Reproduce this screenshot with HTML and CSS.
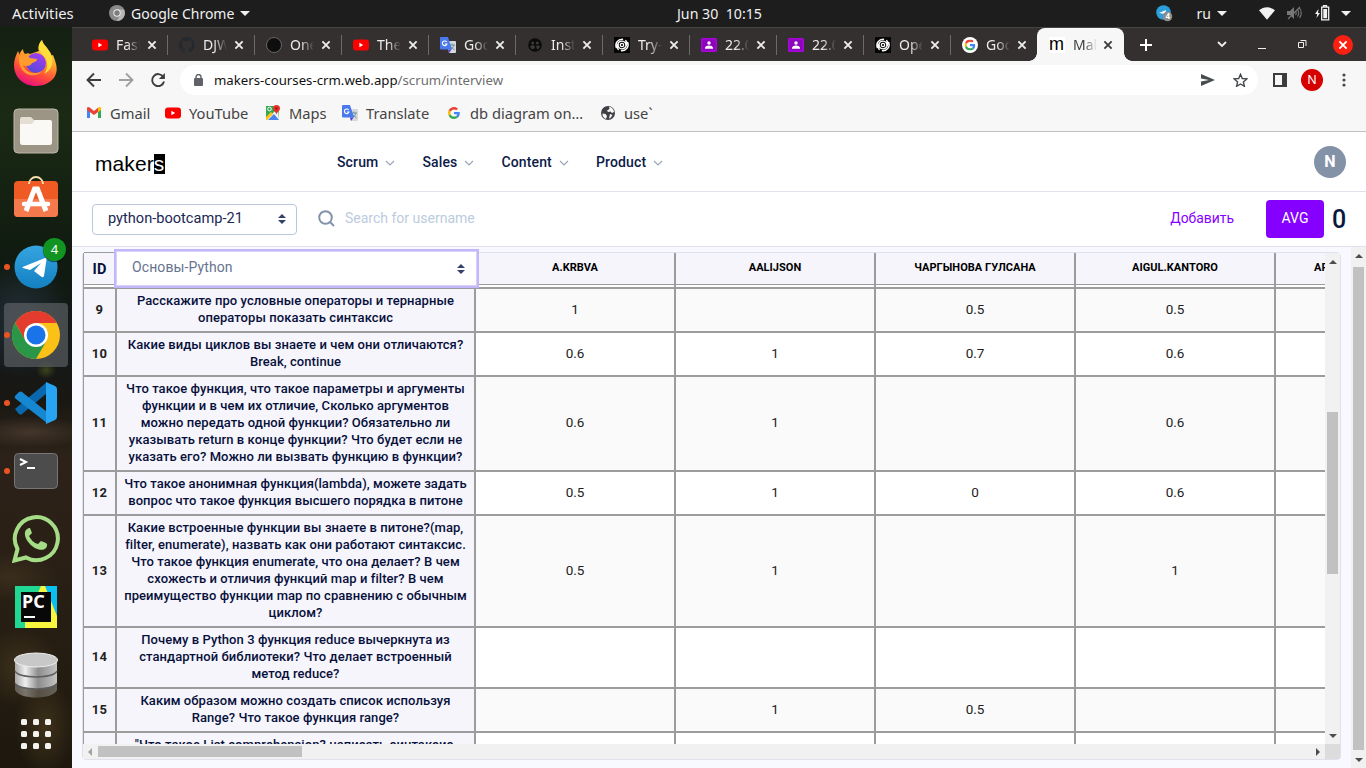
FILE: index.html
```html
<!DOCTYPE html>
<html lang="ru">
<head>
<meta charset="utf-8">
<title>Makers</title>
<link rel="stylesheet" href="styles.css">
</head>
<body>
<svg width="0" height="0" class="defs" aria-hidden="true">
  <defs>
    <linearGradient id="ff" x1=".7" y1="0" x2=".3" y2="1"><stop offset="0" stop-color="#fff44f"/><stop offset=".4" stop-color="#ffa02e"/><stop offset=".7" stop-color="#ff4b3a"/><stop offset="1" stop-color="#e80a83"/></linearGradient>
    <linearGradient id="fp" x1=".8" y1="0" x2=".2" y2="1"><stop offset="0" stop-color="#a63df0"/><stop offset="1" stop-color="#4f4bd8"/></linearGradient>
    <linearGradient id="tg" x1="0" y1="0" x2="0" y2="1"><stop offset="0" stop-color="#35a5e0"/><stop offset="1" stop-color="#1380c2"/></linearGradient>
    <linearGradient id="db" x1="0" y1="0" x2="1" y2="0"><stop offset="0" stop-color="#aaa"/><stop offset=".25" stop-color="#eee"/><stop offset=".55" stop-color="#8d8d8d"/><stop offset="1" stop-color="#c4c4c4"/></linearGradient>
    <symbol id="yt" viewBox="0 0 16 16"><rect y="2.5" width="16" height="11" rx="3" fill="red"/><path d="M6.400 5.800v4.400L10.200 8z" fill="#fff"/></symbol>
    <symbol id="x" viewBox="0 0 10 10"><path d="M1.400 1.400l7.200 7.200M8.600 1.400L1.400 8.600" stroke="currentColor" stroke-width="1.9"/></symbol>
    <symbol id="gt" viewBox="0 0 16 16"><path d="M6 4h9a1 1 0 011 1v10a1 1 0 01-1 1H9z" fill="#d5d9dc"/><path d="M9 8h6M12 6.500v1.500M14 8c-.5 2-2 3.500-3.500 4.500M11 9.500c1 1.500 2 2.500 3.500 3.300" stroke="#66919c" fill="none"/><path d="M8 12.500h3.500L9 16z" fill="#5a35c9"/><path d="M1 0h7l4 12.500H1a1 1 0 01-1-1V1a1 1 0 011-1z" fill="#4a79ee"/><path d="M6.600 5A2.300 2.300 0 106.900 7H4.800" stroke="#fff" stroke-width="1.100" fill="none"/></symbol>
    <symbol id="goo" viewBox="0 0 48 48"><path fill="#EA4335" d="M24 9.500c3.540 0 6.710 1.220 9.210 3.600l6.850-6.850C35.900 2.380 30.470 0 24 0 14.620 0 6.510 5.380 2.560 13.220l7.980 6.190C12.430 13.720 17.740 9.500 24 9.500z"/><path fill="#4285F4" d="M46.980 24.550c0-1.570-.15-3.090-.38-4.550H24v9.020h12.940c-.58 2.960-2.260 5.480-4.780 7.180l7.730 6c4.510-4.180 7.090-10.360 7.090-17.650z"/><path fill="#FBBC05" d="M10.530 28.590c-.48-1.450-.76-2.990-.76-4.590s.27-3.140.76-4.590l-7.980-6.190C.92 16.460 0 20.120 0 24c0 3.880.92 7.540 2.560 10.780l7.970-6.190z"/><path fill="#34A853" d="M24 48c6.480 0 11.930-2.130 15.890-5.810l-7.730-6c-2.150 1.450-4.920 2.300-8.160 2.300-6.260 0-11.570-4.220-13.470-9.910l-7.980 6.190C6.510 42.620 14.620 48 24 48z"/></symbol>
    <symbol id="spiral" viewBox="0 0 16 16"><rect width="16" height="16" fill="#050505"/><g fill="none" stroke="#fff" stroke-linecap="round"><path d="M2.300 10.500C.8 6 4 2 8.500 2.200M13.700 5.500C15.200 10 12 14 7.500 13.800" stroke-width="1.500"/><path d="M4.300 12.500C1.800 9 4.300 4.200 8 4.200c3 0 4.200 2.500 3.800 4.600M11.700 3.500C14.200 7 11.700 11.800 8 11.800c-3 0-4.200-2.500-3.800-4.600" stroke-width="1.300"/><circle cx="8" cy="8" r="1.700" stroke-width="1.200"/></g></symbol>
    <symbol id="class" viewBox="0 0 16 16"><rect y="1" width="16" height="14" rx="1.500" fill="#a906dc"/><rect x="1.500" y="2.500" width="13" height="11" fill="#8c05bb"/><circle cx="8" cy="6" r="1.700" fill="#fff"/><path d="M4 11.800V11c0-1.700 2.400-2.500 4-2.500s4 .8 4 2.500v.8z" fill="#fff"/></symbol>
    <symbol id="chev" viewBox="0 0 10 6"><path d="M1 1l4 4 4-4" fill="none" stroke="#9aa5b8" stroke-width="1.200"/></symbol>
    <symbol id="sort" viewBox="0 0 8 10"><path d="M4 0l4 4H0zM4 10l4-4H0z" fill="#33416b"/></symbol>
    <symbol id="up" viewBox="0 0 8 4"><path d="M0 4h8L4 0z" fill="#4d4d4d"/></symbol>
  </defs>
</svg>

<header class="topbar">
  <span class="activities">Activities</span>
  <svg class="appicon" viewBox="0 0 16 16"><circle cx="8" cy="8" r="8" fill="#8a8a8a"/><path d="M8 4.500h7A8 8 0 018 16l3-6z" fill="#b5b5b5"/><circle cx="8" cy="8" r="3.700" fill="#eee"/><circle cx="8" cy="8" r="2.700" fill="#7c7c7c"/></svg>
  <span class="appname">Google Chrome</span><i class="tri"></i>
  <span class="clock">Jun 30 &nbsp;10:15</span>
  <div class="tray">
    <svg width="17" height="17" viewBox="0 0 17 17"><circle cx="7.500" cy="7.500" r="7.300" fill="#2b9edb"/><path d="M3 8l7-3-1 4z" fill="#fff"/><circle cx="11.500" cy="11.500" r="4.800" fill="#8c8c8c"/><text x="9.400" y="14.300" class="mini">4</text></svg>
    <span class="lang">ru</span><i class="tri"></i>
    <svg class="wifi" width="16" height="13" viewBox="0 0 16 13"><path d="M0 3.300C5 -.8 11 -.8 16 3.300L8 12.800z" fill="#f2f2f2"/></svg>
    <svg class="vol" width="15" height="14" viewBox="0 0 15 14"><path d="M0 5h3l4-4v12L3 9H0z" fill="#777"/><path d="M8.500 5q1.500 2 0 4M10.500 3.500q2.500 3.500 0 7M12.500 2q3.500 5 0 10M1 13L13 1" stroke="#777" fill="none" stroke-width="1.100"/></svg>
    <svg class="bat" width="15" height="16" viewBox="0 0 15 16"><path d="M3.500 4L0 9h2.200l-.7 4L5 8H3z" fill="#f2f2f2"/><path d="M8.500 2V.7h3V2M6.700 2.200h7v12.600h-7z" fill="none" stroke="#f2f2f2" stroke-width="1.300"/><path d="M8.300 4h3.800v9.200H8.300z" fill="#f2f2f2"/></svg>
    <i class="tri"></i>
  </div>
</header>

<div class="desktop">
  <nav class="dock">
    <div class="app"><svg width="46" height="48" viewBox="0 0 46 48"><path d="M5 12c1 2 1 3 1 4 1-3 3-5 4-6 0 2 1 4 2 5 2-1 4-1 5 0l9-3C24 8 27 3 29 1c1 5 4 5 6 10 1 2 1 3 1 4l2-1-1 3 3-1c4 10 5 15 2 21C39 43 31 47 23 47 10 47 1 38 1 26c0-5 2-10 4-14z" fill="url(#ff)"/><circle cx="23" cy="24" r="10" fill="url(#fp)"/><path d="M6 17c5-3 8-1 11 2l7 1c0 3-3 3-5 4-1 3-6 4-9 2 2 7 11 11 19 6-3 4-8 5-12 4C9 34 5 26 6 17z" fill="#ff9b2c"/><path d="M29 1c-4 4-4 9 1 15 5 5 6 12 1 19 8-4 11-13 6-22-3-5-7-7-8-12z" fill="#ffde3b"/></svg></div>
    <div class="app"><svg width="46" height="46" viewBox="0 0 46 46"><rect x="1" y="1" width="44" height="44" rx="4" fill="#9c9585" stroke="#bdb7a8"/><path d="M7 11q0-2 2-2h9l3 3h16q2 0 2 2v20q0 3-3 3H10q-3 0-3-3z" fill="#e4dfd2"/><path d="M7 16h12l3-4h14q3 0 3 3v19q0 3-3 3H10q-3 0-3-3z" fill="#faf9f6"/></svg></div>
    <div class="app store"><svg width="46" height="46" viewBox="0 0 46 46"><rect x="1" y="8" width="44" height="36" rx="4" fill="#ef5a25"/><path d="M1 26h44v14q0 4-4 4H5q-4 0-4-4z" fill="#f47a4e"/><path d="M16 11a7 7 0 0114 0" fill="none" stroke="#f8dfae" stroke-width="1.800"/><path d="M13 38l8.500-22h3L33 38" fill="none" stroke="#fff" stroke-width="5"/><path d="M11 31h24" stroke="#fff" stroke-width="4.500" stroke-linecap="round"/></svg></div>
    <div class="app run"><svg width="46" height="46" viewBox="0 0 46 46"><circle cx="23" cy="23" r="21.500" fill="url(#tg)"/><path d="M9.500 23L32 14q2-.5 1.500 1.500L31 32q-.5 2-3 .5L21 27l7-8-11 7-7-2q-1-.5-.5-1z" fill="#fff"/></svg><b class="badge">4</b></div>
    <div class="app run active"><svg width="48" height="48" viewBox="0 0 48 48"><circle cx="24" cy="24" r="24" fill="#fbc116"/><path d="M3.200 12A24 24 0 0144.800 12H24L13.600 30z" fill="#e33b2e"/><path d="M3.200 12A24 24 0 0024 48l10.400-18L24 36 13.600 30z" fill="#2a9748"/><circle cx="24" cy="24" r="12" fill="#fff"/><circle cx="24" cy="24" r="9.500" fill="#1a73e8"/></svg></div>
    <div class="app run"><svg width="44" height="44" viewBox="0 0 44 44"><path d="M1 28l4 5q2 1 3 0L33 12V1z" fill="#0a69ae"/><path d="M1 15l4-4q2-1 3 0l25 20v11L2 18q-2-1-1-3z" fill="#1688d2"/><path d="M32 1l9 4q2 1 2 3v28q0 2-2 3l-9 4z" fill="#27a4f2"/></svg></div>
    <div class="app run"><svg width="46" height="46" viewBox="0 0 46 46"><rect x="1.500" y="5.500" width="43" height="35" rx="4" fill="#4c4c4c" stroke="#777"/><path d="M7 11l6 3-6 3M14 20h8" fill="none" stroke="#fff" stroke-width="2"/></svg></div>
    <div class="app"><svg width="48" height="48" viewBox="0 0 48 48"><path d="M2.500 45.500l3-11.500A21.500 21.500 0 1114 42.500z" fill="none" stroke="#a5dc86" stroke-width="4"/><path d="M17 13c-6 2-5 9 0 15s13 9 17 5c2-3 1-4 0-5l-5-2-3 3c-4-1-7-4-9-8l3-3-2-5z" fill="#a5dc86"/></svg></div>
    <div class="app"><svg width="42" height="42" viewBox="0 0 42 42"><path d="M0 0h42v42H0z" fill="#20d794"/><path d="M42 0v42H10V36L26 0z" fill="#f9f63e"/><path d="M30 0h12v30z" fill="#09c0f0"/><path d="M6 6h30v30H6z" fill="#080808"/><text x="7" y="22" class="pc">PC</text><path d="M9 30h11v2H9z" fill="#fff"/></svg></div>
    <div class="app"><svg width="46" height="48" viewBox="0 0 46 48"><path d="M2 9v30c4 10 38 10 42 0V9z" fill="url(#db)" opacity=".4"/><path d="M2 9v23c4 8 38 8 42 0V9z" fill="url(#db)"/><path d="M2 20c4 8 38 8 42 0M2 32c4 8 38 8 42 0" fill="none" stroke="#5e5e5e" stroke-width="1.500"/><ellipse cx="23" cy="9" rx="21.500" ry="7" fill="#c8c8c8" stroke="#eee"/></svg></div>
    <div class="app grid9"><i></i><i></i><i></i><i></i><i></i><i></i><i></i><i></i><i></i></div>
  </nav>

  <div class="window">
    <div class="tabs">
      <div class="tab"><svg class="fav"><use href="#yt"/></svg><span>Fast</span><svg class="cl"><use href="#x"/></svg></div>
      <div class="tab"><svg class="fav" viewBox="0 0 16 16"><path fill="#24292f" d="M8 0a8 8 0 00-2.500 15.600c.4.100.5-.2.500-.4v-1.500c-2.200.5-2.700-1-2.700-1-.4-.9-.9-1.200-.9-1.200-.7-.5.100-.5.100-.5.800.100 1.200.8 1.200.8.700 1.200 1.900.9 2.300.7.100-.5.300-.9.500-1.100-1.800-.2-3.600-.9-3.600-4 0-.9.300-1.600.8-2.200-.100-.2-.4-1 .1-2.100 0 0 .7-.2 2.200.8a7.600 7.600 0 014 0c1.500-1 2.200-.8 2.200-.8.4 1.100.2 1.900.1 2.100.5.600.8 1.300.8 2.200 0 3.100-1.900 3.800-3.700 4 .3.300.6.800.6 1.500v2.200c0 .2.100.5.500.4A8 8 0 008 0z"/></svg><span>DJW</span><svg class="cl"><use href="#x"/></svg></div>
      <div class="tab"><svg class="fav" viewBox="0 0 16 16"><circle cx="8" cy="8" r="7.500" fill="#0e0e0e" stroke="#777" stroke-width=".8"/></svg><span>One</span><svg class="cl"><use href="#x"/></svg></div>
      <div class="tab"><svg class="fav"><use href="#yt"/></svg><span>The</span><svg class="cl"><use href="#x"/></svg></div>
      <div class="tab"><svg class="fav"><use href="#gt"/></svg><span>Goo</span><svg class="cl"><use href="#x"/></svg></div>
      <div class="tab"><svg class="fav" viewBox="0 0 16 16"><circle cx="8" cy="8" r="6.800" fill="#0b0b0b"/><g fill="#3c3938"><circle cx="5.700" cy="6" r="1.500"/><circle cx="10.300" cy="6" r="1.500"/><path d="M3 10c1-2.500 4.500-2.500 5 0-.5 1.500-1 2-2 2.300C4.500 12 3.500 11 3 10zM9 9.500c1-1.500 3-1.200 4 0-.5 1.500-1.500 2.500-3 3 0-1-.5-2-1-3z"/></g></svg><span>Inst</span><svg class="cl"><use href="#x"/></svg></div>
      <div class="tab"><svg class="fav"><use href="#spiral"/></svg><span>Try-</span><svg class="cl"><use href="#x"/></svg></div>
      <div class="tab"><svg class="fav"><use href="#class"/></svg><span>22.0</span><svg class="cl"><use href="#x"/></svg></div>
      <div class="tab"><svg class="fav"><use href="#class"/></svg><span>22.0</span><svg class="cl"><use href="#x"/></svg></div>
      <div class="tab"><svg class="fav"><use href="#spiral"/></svg><span>Ope</span><svg class="cl"><use href="#x"/></svg></div>
      <div class="tab last"><svg class="fav" viewBox="0 0 16 16"><circle cx="8" cy="8" r="8" fill="#fff"/><use href="#goo" x="2.500" y="2.500" width="11" height="11"/></svg><span>Goo</span><svg class="cl"><use href="#x"/></svg></div>
      <div class="tab current"><b class="fav m">m</b><span>Mak</span><svg class="cl"><use href="#x"/></svg></div>
      <svg class="plus" width="12" height="12" viewBox="0 0 12 12"><path d="M6 0v12M0 6h12" stroke="#fff" stroke-width="2"/></svg>
      <div class="winctl">
        <svg width="10" height="7" viewBox="0 0 10 7"><path d="M1 1l4 4 4-4" fill="none" stroke="#eee" stroke-width="1.800"/></svg>
        <svg width="8" height="8" viewBox="0 0 8 8"><path d="M0 5.500h8" stroke="#eee"/></svg>
        <svg width="9" height="9" viewBox="0 0 9 9"><path d="M.5 2.500h5v5h-5zM2.500.5h5.500v5.500" fill="none" stroke="#eee"/></svg>
        <span class="close"><svg width="10" height="10"><use href="#x"/></svg></span>
      </div>
    </div>

    <div class="toolbar">
      <svg width="16" height="16" viewBox="0 0 16 16"><path d="M15 8H2M8 1.500L1.500 8 8 14.500" fill="none" stroke="#3c3c3c" stroke-width="1.900"/></svg>
      <svg width="16" height="16" viewBox="0 0 16 16"><path d="M1 8h13M8 1.500L14.500 8 8 14.500" fill="none" stroke="#a0a0a0" stroke-width="1.900"/></svg>
      <svg width="16" height="16" viewBox="0 0 16 16"><path d="M13.200 4.800A6 6 0 1014 9.500" fill="none" stroke="#3c3c3c" stroke-width="1.900"/><path d="M14.900 1v6h-6z" fill="#3c3c3c"/></svg>
      <div class="omnibox">
        <svg width="9" height="12" viewBox="0 0 9 12"><rect y="4" width="9" height="8" rx="1" fill="#5f6368"/><path d="M2 4.500V3a2.500 2.500 0 015 0v1.500" fill="none" stroke="#5f6368" stroke-width="1.400"/></svg>
        <span class="url">makers-courses-crm.web.app<em>/scrum/interview</em></span>
        <svg class="send" width="14" height="12" viewBox="0 0 14 12"><path d="M0 0l14 6L0 12V7.500L8 6 0 4.500z" fill="#4a4d50"/></svg>
        <svg width="15" height="14" viewBox="0 0 15 14"><path d="M7.500 1.300l1.800 4.200 4.500.4-3.400 3 1 4.400-3.900-2.300-3.900 2.300 1-4.400-3.400-3 4.500-.4z" fill="none" stroke="#45484b" stroke-width="1.400"/></svg>
      </div>
      <svg class="panel" width="14" height="14" viewBox="0 0 14 14"><path d="M1 1h12v12H1z" fill="none" stroke="#3c3c3c" stroke-width="2"/><path d="M9 1h4v12H9z" fill="#3c3c3c"/></svg>
      <b class="profile">N</b>
      <svg class="kebab" width="4" height="14" viewBox="0 0 4 14" fill="#4a4a4a"><circle cx="2" cy="2" r="1.600"/><circle cx="2" cy="7" r="1.600"/><circle cx="2" cy="12" r="1.600"/></svg>
    </div>

    <div class="bookmarks">
      <a class="b1"><svg width="14" height="11" viewBox="0 0 14 11"><path d="M0 1.500V11h3V4z" fill="#4285f4"/><path d="M14 1.500V11h-3V4z" fill="#34a853"/><path d="M0 1.500C0 0 1.500-.5 3 .7L7 4l4-3.300V5L7 8 0 3z" fill="#ea4335"/><path d="M11 .7C12.500-.5 14 0 14 1.500V3l-3 2.300z" fill="#fbbc04"/></svg>Gmail</a>
      <a class="b2"><svg><use href="#yt"/></svg>YouTube</a>
      <a class="b3"><svg viewBox="0 0 16 16"><path d="M1 1h13v14H1z" fill="#34a853"/><path d="M1 15L13 3l1 12z" fill="#f4f4f4"/><path d="M3 15l6-6 5 6z" fill="#4a84ee"/><path d="M1 12l5-5 2 2-6 6H1z" fill="#fbc21a"/><circle cx="4.500" cy="4" r="1.800" fill="none" stroke="#fff"/><path d="M11.500 9.500C11 7 8 6 8 3.500a3.500 3.500 0 017 0c0 2.500-3 3.500-3.500 6z" fill="#ea3328"/><circle cx="11.500" cy="3.500" r="1.200" fill="#9c1a14"/></svg>Maps</a>
      <a class="b4"><svg><use href="#gt"/></svg>Translate</a>
      <a class="b5"><svg class="g"><use href="#goo"/></svg>db diagram on…</a>
      <a class="b6"><svg viewBox="0 0 16 16"><circle cx="8" cy="8" r="7" fill="#3f4144"/><path d="M2.500 8.500l3 .5 1.500 2-1 3C3.500 13 2.200 11 2.500 8.500zM9 1.800C11.500 2 14 4.500 14 7l-2 1-1.500-1.500L8 7 7 5.500 9.500 4zM10 9l2.500 1-2 3-1.500.5z" fill="#f7f7f7"/></svg>use`</a>
    </div>

    <div class="page">
      <header class="site">
        <div class="logo">maker<b>s</b></div>
        <nav>
          <a>Scrum<svg><use href="#chev"/></svg></a>
          <a>Sales<svg><use href="#chev"/></svg></a>
          <a>Content<svg><use href="#chev"/></svg></a>
          <a>Product<svg><use href="#chev"/></svg></a>
        </nav>
        <b class="avatar">N</b>
      </header>
      <div class="filters">
        <div class="select">python-bootcamp-21<svg><use href="#sort"/></svg></div>
        <svg class="lens" width="17" height="17" viewBox="0 0 17 17"><circle cx="7.500" cy="7.500" r="6.300" fill="none" stroke="#8392ab" stroke-width="2"/><path d="M12 12l4 4" stroke="#8392ab" stroke-width="2"/></svg>
        <span class="search">Search for username</span>
        <a class="add">Добавить</a>
        <b class="avg">AVG</b><span class="zero">0</span>
      </div>
      <div class="content">
        <div class="box">
          <div class="sheet">
            <div class="row head"><div>ID</div><div class="q"><div class="topic">Основы-Python<svg><use href="#sort"/></svg></div></div><div>A.KRBVA</div><div>AALIJSON</div><div>ЧАРГЫНОВА ГУЛСАНА</div><div>AIGUL.KANTORO</div><div class="cut">ARTUR.B</div></div>
            <div class="row r2 odd"><b>9</b><p>Расскажите про условные операторы и тернарные<br>операторы показать синтаксис</p><div>1</div><div></div><div>0.5</div><div>0.5</div><div></div></div>
            <div class="row r2"><b>10</b><p>Какие виды циклов вы знаете и чем они отличаются?<br>Break, continue</p><div>0.6</div><div>1</div><div>0.7</div><div>0.6</div><div></div></div>
            <div class="row r5 odd"><b>11</b><p>Что такое функция, что такое параметры и аргументы<br>функции и в чем их отличие, Сколько аргументов<br>можно передать одной функции? Обязательно ли<br>указывать return в конце функции? Что будет если не<br>указать его? Можно ли вызвать функцию в функции?</p><div>0.6</div><div>1</div><div></div><div>0.6</div><div></div></div>
            <div class="row r2"><b>12</b><p>Что такое анонимная функция(lambda), можете задать<br>вопрос что такое функция высшего порядка в питоне</p><div>0.5</div><div>1</div><div>0</div><div>0.6</div><div></div></div>
            <div class="row r6 odd"><b>13</b><p>Какие встроенные функции вы знаете в питоне?(map,<br>filter, enumerate), назвать как они работают синтаксис.<br>Что такое функция enumerate, что она делает? В чем<br>схожесть и отличия функций map и filter? В чем<br>преимущество функции map по сравнению с обычным<br>циклом?</p><div>0.5</div><div>1</div><div></div><div>1</div><div></div></div>
            <div class="row r3"><b>14</b><p>Почему в Python 3 функция reduce вычеркнута из<br>стандартной библиотеки? Что делает встроенный<br>метод reduce?</p><div></div><div></div><div></div><div></div><div></div></div>
            <div class="row r2 odd"><b>15</b><p>Каким образом можно создать список используя<br>Range? Что такое функция range?</p><div></div><div>1</div><div>0.5</div><div></div><div></div></div>
            <div class="row r2"><b></b><p>"Что такое List comprehension? написать синтаксис,<br>&nbsp;</p><div></div><div></div><div></div><div></div><div></div></div>
          </div>
          <div class="vbar inner"><svg><use href="#up"/></svg><i></i><svg class="dn"><use href="#up"/></svg></div>
          <div class="hbar"><svg class="lf" viewBox="0 0 4 8"><path d="M4 0v8L0 4z" fill="#a3a3a3"/></svg><i></i><svg class="rt" viewBox="0 0 4 8"><path d="M0 0v8l4-4z" fill="#4d4d4d"/></svg></div>
          <div class="corner"></div>
        </div>
        <div class="vbar outer"><svg><use href="#up"/></svg><i></i><svg class="dn"><use href="#up"/></svg></div>
      </div>
    </div>
  </div>
</div>
</body>
</html>
```
FILE: styles.css
```css
* { box-sizing: border-box; }
body { margin: 0; width: 1366px; height: 768px; overflow: hidden; background: #1d1d1d; font-family: "Noto Sans", sans-serif; }
.defs { position: absolute; }
svg { flex: none; display: block; }

/* System bar */
.topbar { height: 27px; display: flex; align-items: center; background: #1d1d1d; color: #f0f0f0; font-size: 14px; padding: 0 16px 1px 12px; }
.activities { width: 97px; font-size: 14.800px; }
.appicon { width: 16px; height: 16px; margin-right: 6px; }
.appname { width: 109px; white-space: nowrap; }
.tri { border: 5px solid transparent; border-top-color: #f0f0f0; border-bottom: 0; width: 0; height: 0; flex: none; }
.clock { margin-left: 427px; font-size: 14.200px; white-space: nowrap; }
.tray { margin-left: auto; display: flex; align-items: center; }
.mini { font: 700 8px "Noto Sans", sans-serif; fill: #fff; }
.lang { margin: 0 6px 0 24px; }
.wifi { margin: 0 12px 0 32px; }
.vol { margin-right: 13px; }
.bat { margin-right: 10px; }
.tray > .tri:last-child { margin-left: 1px; margin-right: -1px; }

.desktop { display: flex; height: 741px; }

/* Launcher */
.dock { width: 72px; flex: none; padding-top: 2px; background:
  radial-gradient(ellipse 50px 60px at 20px 290px, #26343fcc, transparent),
  radial-gradient(ellipse 10px 9px at 46px 343px, #56602099, transparent),
  radial-gradient(ellipse 60px 16px at 30px 405px, #544235aa, transparent),
  radial-gradient(ellipse 50px 25px at 10px 550px, #43351faa, transparent),
  radial-gradient(ellipse 40px 40px at 20px 640px, #4a3c22aa, transparent),
  radial-gradient(ellipse 30px 50px at 45px 700px, #4c3d20aa, transparent),
  linear-gradient(#142012 0, #1a2a14 12%, #101a10 32%, #14191a 44%, #191712 50%, #2c2219 58%, #2a2016 70%, #241c11 88%, #1d170e); }
.app { position: relative; height: 68px; display: flex; align-items: center; justify-content: center; }
.app.store { padding-bottom: 6px; }
.app.run::before { content: ""; position: absolute; left: 4px; top: 31px; width: 6px; height: 6px; border-radius: 50%; background: #e95420; }
.app.active::after { content: ""; position: absolute; left: 4px; top: 2px; width: 64px; height: 64px; border-radius: 4px; background: #5e6265aa; }
.app.active svg { position: relative; z-index: 1; }
.app.active::before { z-index: 1; }
.badge { position: absolute; left: 43px; top: 5px; width: 23px; height: 23px; border-radius: 50%; background: #119422; color: #fff; font-weight: 400; font-size: 13px; line-height: 23px; text-align: center; box-shadow: 0 1px 1px #0008; }
.pc { font: 700 18px "Noto Sans", sans-serif; fill: #fff; }
.grid9 { height: 50px; display: grid; grid-template-columns: repeat(3, 6px); grid-template-rows: repeat(3, 6px); gap: 6px; justify-content: center; align-content: center; align-items: stretch; }
.grid9 i { background: #f4f2ee; border-radius: 1.500px; }

/* Browser chrome */
.window { width: 1294px; display: flex; flex-direction: column; }
.tabs { height: 34px; background: #33302f; border-top: 1px solid #464342; display: flex; align-items: center; padding-left: 9px; color: #ececec; flex: none; }
.tab { width: 87px; height: 20px; padding-left: 11px; border-right: 1px solid #6c6967; display: flex; align-items: center; flex: none; }
.tab.last { border-color: transparent; width: 86px; }
.tab .fav { width: 16px; height: 16px; margin-right: 8px; flex: none; }
.tab span { width: 24px; font-size: 14px; overflow: hidden; white-space: nowrap; margin-top: -1px; -webkit-mask: linear-gradient(90deg, #000 45%, transparent); mask: linear-gradient(90deg, #000 45%, transparent); }
.cl { width: 10px; height: 10px; margin-left: 7px; }
.current { height: 33px; border: 0; border-radius: 8px 8px 0 0; background: #f7f7f7; color: #3c3c3c; padding-left: 12px; position: relative; }
.current .cl { margin-left: 6px; }
.current::before, .current::after { content: ""; position: absolute; bottom: 0; width: 8px; height: 8px; }
.current::before { left: -8px; background: radial-gradient(circle at 0 0, transparent 7.500px, #f7f7f7 8px); }
.current::after { right: -8px; background: radial-gradient(circle at 100% 0, transparent 7.500px, #f7f7f7 8px); }
.tab .m { background: #fff; color: #000; font: 18px/14px "Liberation Sans", sans-serif; }
.plus { margin-left: 16px; }
.winctl { margin-left: auto; display: flex; align-items: center; padding-right: 13px; }
.winctl > svg:nth-child(1) { margin-right: 31px; }
.winctl > svg:nth-child(2) { margin-right: 32px; margin-top: 4px; }
.winctl > svg:nth-child(3) { margin-right: 26px; }
.close { width: 20px; height: 20px; border-radius: 50%; background: #fb2011; display: grid; place-items: center; color: #fff; }
.toolbar { height: 37px; background: #f7f7f7; display: flex; align-items: center; padding: 1px 19px 0 14px; gap: 16px; flex: none; }
.omnibox { width: 1078px; height: 30px; border-radius: 15px; background: #fff; display: flex; align-items: center; padding: 0 10px 0 14px; margin-left: -2px; margin-right: 1px; flex: none; }
.url { margin-left: 11px; font-size: 13.220px; color: #111; white-space: nowrap; }
.url em { font-style: normal; color: #6e6e6e; }
.send { margin-left: auto; margin-right: 18px; }
.panel { margin-right: -2px; margin-left: -2px; }
.profile { width: 22px; height: 22px; border-radius: 50%; background: #d50000; color: #fff; font-weight: 400; font-size: 12.500px; line-height: 22px; text-align: center; }
.kebab { margin-left: 3px; }
.bookmarks { height: 33px; background: #f7f7f7; display: flex; align-items: center; padding-left: 15px; color: #444; font-size: 14.700px; flex: none; padding-bottom: 4px; }
.bookmarks a { display: flex; align-items: center; white-space: nowrap; gap: 8px; height: 20px; }
.bookmarks svg { width: 16px; height: 16px; }
.b1 { width: 78px; } .b1 svg { width: 14px !important; height: 11px !important; margin-right: 1px; }
.b2 { width: 100px; } .b3 { width: 77px; } .b4 { width: 104px; } .b5 { width: 154px; }
.bookmarks .g { width: 12px; height: 12px; margin: 0 2px; }

/* Site header */
.page { flex: 1; display: flex; flex-direction: column; background: #f8f9fe; border-top: 1px solid #c2c2c4; font-family: Roboto, sans-serif; min-height: 0; }
.site { height: 60px; background: #fff; border-bottom: 1px solid #e1e1ee; display: flex; align-items: center; padding: 0 20px 0 23px; flex: none; }
.logo { width: 242px; font: 21px/20px "Liberation Sans", sans-serif; color: #000; padding-top: 4px; display: flex; letter-spacing: .1px; }
.logo b { background: #000; color: #fff; font-weight: 400; width: 11px; height: 20px; }
.site nav { display: flex; gap: 27px; font-size: 14px; font-weight: 500; color: #0d1b48; }
.site nav a { display: flex; align-items: center; letter-spacing: .14px; }
.site nav svg { width: 10px; height: 6px; margin-left: 7px; margin-top: 2px; }
.avatar { margin-left: auto; width: 32px; height: 32px; border-radius: 50%; background: #8492a8; color: #fff; font-size: 16px; line-height: 31px; text-align: center; }
.filters { height: 55px; background: #fff; border-bottom: 1px solid #e1e1ee; display: flex; align-items: center; padding: 0 20px; flex: none; }
.select { width: 205px; height: 31px; border: 1px solid #b9c8dc; border-radius: 4px; padding: 0 10px 2px 15px; display: flex; align-items: center; justify-content: space-between; color: #1a2854; font-size: 14.600px; }
.select svg, .topic svg { width: 8px; height: 10px; margin-top: 2px; }
.lens { margin: 0 10px 1px 21px; }
.search { font-size: 14px; color: #bccbdd; padding-bottom: 2px; }
.add { margin-left: auto; margin-right: 32px; color: #8500ff; font-size: 13.900px; padding-bottom: 2px; }
.avg { width: 58px; height: 38px; background: #8500ff; border-radius: 4px; color: #fff; font-weight: 400; font-size: 14px; line-height: 36px; text-align: center; }
.zero { font-size: 25px; font-weight: 500; color: #0a1740; width: 30px; text-align: center; margin-right: -8px; }

/* Grades table */
.content { flex: 1; display: flex; justify-content: space-between; padding-left: 10px; min-height: 0; }
.box { margin-top: 5px; width: 1259px; height: 508px; border: 1px solid #e1e1ee; border-radius: 4px; display: grid; grid-template: 491px 15px / 1242px 15px; background: #fff; }
.sheet { border-left: 1px solid #9c9c9c; height: 491px; clip-path: inset(-5px 0 0 -1px); }
.row { display: grid; grid-template-columns: 33px 359px repeat(5, 200px); width: 1392px; }
.row > * { border: solid #9c9c9c; border-width: 0 2px 2px 0; margin: 0; text-align: center; display: flex; align-items: center; justify-content: center; }
.row > div { font-size: 13.500px; color: #222; padding-bottom: 3px; }
.row > b { background: #f6f5fb; font-size: 13px; color: #222; padding-bottom: 2px; letter-spacing: .3px; }
.row > p { display: block; background: #f6f5fb; color: #07103c; font-weight: 500; font-size: 13px; line-height: 17px; letter-spacing: .07px; white-space: nowrap; padding-top: 3px; }
.odd { background: #fafafa; }
.r2 { height: 44px; } .r3 { height: 61px; } .r5 { height: 95px; } .r6 { height: 112px; }
.head { height: 36px; background: linear-gradient(#f6f5fb 31px, #9c9c9c 31px, #9c9c9c 32px, #fff 32px); }
.row.head > div { font-size: 11px; font-weight: 700; color: #000; padding-bottom: 5px; letter-spacing: .05px; }
.row.head > div:first-child { font-size: 14.500px; color: #07103c; padding-bottom: 2px; border-top: 1px solid #9c9c9c; margin-top: -1px; }
.row.head > .q { padding: 0; position: relative; }
.topic { position: absolute; left: 0; top: -1px; width: 359px; height: 33px; background: #fff; box-shadow: 0 0 0 1px #d9d0fb, 0 0 0 3px #c3b6fb; display: flex; align-items: center; justify-content: space-between; padding: 0 11px 3px 15px; font-size: 14px; font-weight: 400; color: #67748e; letter-spacing: .1px; }
.topic svg { margin-top: 4px; }
.row.head > .cut { justify-content: flex-start; padding-left: 38px; }
.vbar { width: 15px; background: #f1f1f1; display: flex; flex-direction: column; align-items: center; }
.vbar svg { width: 8px; height: 4px; margin-top: 7px; }
.vbar .dn { margin: auto 0 6px; transform: scaleY(-1); }
.vbar i { width: 11px; background: #c1c1c1; }
.inner i { height: 162px; margin-top: 148px; }
.outer i { height: 483px; margin-top: 9px; }
.outer .dn { margin-bottom: 6px; }
.hbar { background: #f1f1f1; display: flex; align-items: center; padding: 0 5px; }
.hbar svg { width: 4px; height: 8px; }
.hbar i { width: 204px; height: 11px; background: #c1c1c1; margin-left: 6px; }
.rt { margin-left: auto; }
.corner { background: #dcdcdc; }
```
